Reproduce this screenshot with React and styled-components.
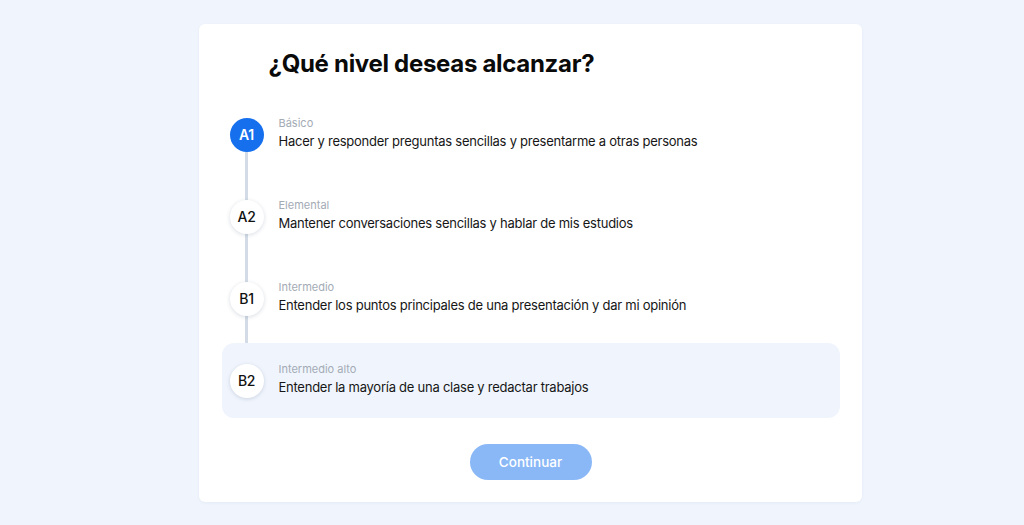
import React, { useState } from 'react';
import styled, { createGlobalStyle } from 'styled-components';

const GlobalStyle = createGlobalStyle`
  html, body {
    margin: 0;
    padding: 0;
    background: #f0f5fd;
    font-family: 'Inter', 'Liberation Sans', sans-serif;
    -webkit-font-smoothing: antialiased;
  }
`;

const levels = [
  { code: 'A1', label: 'Básico', text: 'Hacer y responder preguntas sencillas y presentarme a otras personas' },
  { code: 'A2', label: 'Elemental', text: 'Mantener conversaciones sencillas y hablar de mis estudios' },
  { code: 'B1', label: 'Intermedio', text: 'Entender los puntos principales de una presentación y dar mi opinión' },
  { code: 'B2', label: 'Intermedio alto', text: 'Entender la mayoría de una clase y redactar trabajos' },
];

const Page = styled.div`
  display: flex;
  justify-content: center;
  padding: 24px 0 0 36px;
  height: 525px;
  box-sizing: border-box;
`;

const Card = styled.div`
  width: 663px;
  height: 478px;
  box-sizing: border-box;
  background: #fff;
  border-radius: 6px;
  box-shadow: 0 1px 3px rgba(30, 60, 110, 0.06);
  padding: 0 22px 0 23px;
  display: flex;
  flex-direction: column;
`;

const Title = styled.h1`
  margin: 24px 0 0 47px;
  font-size: 24px;
  line-height: 32px;
  font-weight: 700;
  letter-spacing: -0.3px;
  color: #0a0a0a;
`;

const List = styled.div`
  display: flex;
  flex-direction: column;
  gap: 7px;
  margin-top: 17px;
`;

const Row = styled.div`
  position: relative;
  height: 75px;
  display: flex;
  align-items: center;
  gap: 15px;
  padding-left: 8px;
  border-radius: 12px;
  background: ${p => (p.$highlight ? '#f0f5fd' : 'transparent')};
  cursor: pointer;
`;

const Connector = styled.span`
  position: absolute;
  left: 23px;
  top: 37px;
  width: 3px;
  height: 82px;
  background: #d3dce6;
`;

const Badge = styled.div`
  position: relative;
  z-index: 1;
  width: 34px;
  height: 34px;
  border-radius: 50%;
  flex-shrink: 0;
  display: flex;
  align-items: center;
  justify-content: center;
  font-size: 14px;
  font-weight: ${p => (p.$active ? 600 : 500)};
  letter-spacing: -0.3px;
  color: ${p => (p.$active ? '#fff' : '#111')};
  background: ${p => (p.$active ? '#1670ee' : '#fff')};
  box-shadow: ${p => (p.$active ? 'none' : '0 1px 4px rgba(20, 40, 80, 0.16)')};
`;

const TextBlock = styled.div`
  display: flex;
  flex-direction: column;
  margin-top: -4px;
`;

const Label = styled.span`
  font-size: 11px;
  line-height: 16px;
  color: #a3abb5;
`;

const Description = styled.span`
  font-size: 13px;
  line-height: 20px;
  color: #161616;
  letter-spacing: -0.25px;
`;

const Footer = styled.div`
  display: flex;
  justify-content: center;
  margin-top: 26px;
`;

const Button = styled.button`
  width: 122px;
  height: 36px;
  border: none;
  border-radius: 18px;
  background: #8ab8f7;
  color: #fff;
  font-family: inherit;
  font-size: 13.5px;
  font-weight: 500;
  cursor: default;
`;

export default function App() {
  const [selected] = useState('A1');
  const [hovered, setHovered] = useState('B2');

  return (
    <>
      <GlobalStyle />
      <Page>
        <Card>
          <Title>¿Qué nivel deseas alcanzar?</Title>
          <List>
            {levels.map((lvl, i) => (
              <Row
                key={lvl.code}
                $highlight={hovered === lvl.code}
                onMouseEnter={() => setHovered(lvl.code)}
              >
                {i < levels.length - 1 && <Connector />}
                <Badge $active={selected === lvl.code}>{lvl.code}</Badge>
                <TextBlock>
                  <Label>{lvl.label}</Label>
                  <Description>{lvl.text}</Description>
                </TextBlock>
              </Row>
            ))}
          </List>
          <Footer>
            <Button>Continuar</Button>
          </Footer>
        </Card>
      </Page>
    </>
  );
}
